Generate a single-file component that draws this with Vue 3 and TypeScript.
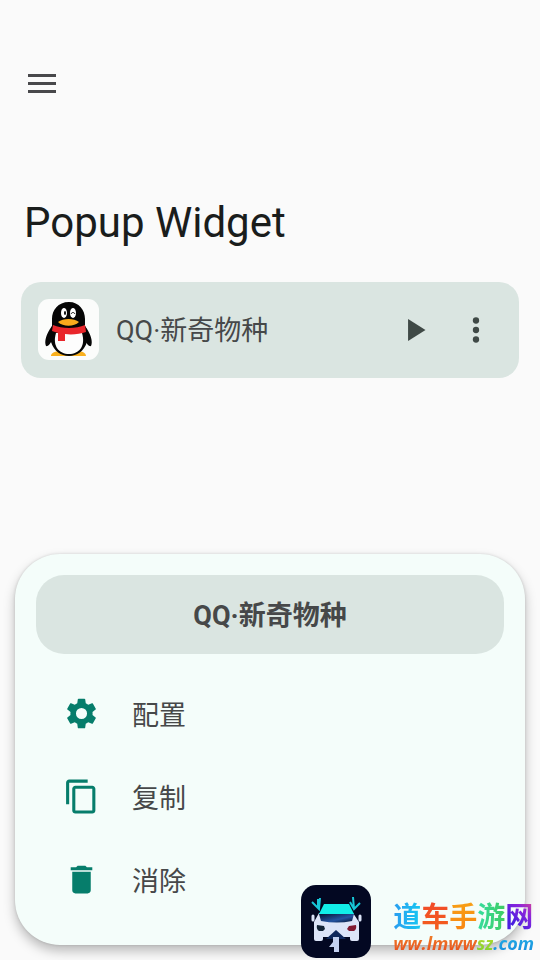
<script setup lang="ts">
import { ref } from 'vue'

interface Action {
  id: string
  label: string
  path: string
}

const widgetName = ref('QQ·新奇物种')

const actions: Action[] = [
  {
    id: 'configure',
    label: '配置',
    path: 'M19.14 12.94c.04-.3.06-.61.06-.94 0-.32-.02-.64-.07-.94l2.03-1.58c.18-.14.23-.41.12-.61l-1.92-3.32c-.12-.22-.37-.29-.59-.22l-2.39.96c-.5-.38-1.03-.7-1.62-.94l-.36-2.54c-.04-.24-.24-.41-.48-.41h-3.84c-.24 0-.43.17-.47.41l-.36 2.54c-.59.24-1.13.57-1.62.94l-2.39-.96c-.22-.08-.47 0-.59.22L2.74 8.87c-.12.21-.08.47.12.61l2.03 1.58c-.05.3-.09.63-.09.94s.02.64.07.94l-2.03 1.58c-.18.14-.23.41-.12.61l1.92 3.32c.12.22.37.29.59.22l2.39-.96c.5.38 1.03.7 1.62.94l.36 2.54c.05.24.24.41.48.41h3.84c.24 0 .44-.17.47-.41l.36-2.54c.59-.24 1.13-.56 1.62-.94l2.39.96c.22.08.47 0 .59-.22l1.92-3.32c.12-.22.07-.47-.12-.61l-2.01-1.58zM12 15.6A3.6 3.6 0 1 1 12 8.4a3.6 3.6 0 0 1 0 7.2z',
  },
  {
    id: 'copy',
    label: '复制',
    path: 'M16 1H4c-1.1 0-2 .9-2 2v14h2V3h12V1zm3 4H8c-1.1 0-2 .9-2 2v14c0 1.1.9 2 2 2h11c1.1 0 2-.9 2-2V7c0-1.1-.9-2-2-2zm0 16H8V7h11v14z',
  },
  {
    id: 'remove',
    label: '消除',
    path: 'M6 19c0 1.100.9 2 2 2h8c1.100 0 2-.9 2-2V7H6v12zM19 4h-3.500l-1-1h-5l-1 1H5v2h14V4z',
  },
]
</script>

<template>
  <div class="page">
    <header class="bar">
      <button class="icon-button" type="button" aria-label="Menu">
        <svg viewBox="0 0 28 20" class="menu-icon"><path d="M0 0h28v3H0zM0 8h28v3H0zM0 16h28v3H0z" /></svg>
      </button>
    </header>

    <main class="content">
      <h1 class="title">Popup Widget</h1>
      <article class="card">
        <svg class="avatar" viewBox="0 0 61 61" aria-hidden="true">
          <rect width="61" height="61" rx="11" fill="#fbfcfb" />
          <path d="M13 57c0-4 7-6 14-4l4 2 4-2c7-2 13 0 13 4z" fill="#f9b01e" />
          <path d="M14 27C8 35 6 43 8 47c2 1 5-3 6-6M47 27c6 8 8 16 6 20-2 1-5-3-6-6" fill="#060606" />
          <path d="M31 3C20 3 14 11 14 20v7c-2 5-3 10-1 16 3 9 10 14 18 14s15-5 18-14c2-6 1-11-2-16v-7C47 11 41 3 31 3z" fill="#060606" />
          <path d="M18 34h26c4 13-3 21-13 21S14 47 18 34z" fill="#fdfdfd" />
          <ellipse cx="26" cy="14" rx="3" ry="5" fill="#fff" />
          <ellipse cx="35" cy="14" rx="3" ry="5" fill="#fff" />
          <ellipse cx="27" cy="14" rx="1" ry="2" fill="#060606" />
          <path d="M33 15c1-2 3-2 4 0" fill="none" stroke="#060606" stroke-width="1" />
          <path d="M20 23c5-4 16-4 21 0-5 5-16 5-21 0z" fill="#f9aa1c" />
          <path d="M15 26c9 4 23 4 32 0l1 7c-6 2-14 3-21 2v7h-7v-8l-6-2z" fill="#e9262b" />
        </svg>
        <span class="card-name">{{ widgetName }}</span>
        <button class="icon-button" type="button" aria-label="Play">
          <svg class="icon" viewBox="0 0 24 24"><path d="M7 5v14l11-7z" /></svg>
        </button>
        <button class="icon-button" type="button" aria-label="More">
          <svg class="icon" viewBox="0 0 24 24">
            <circle cx="12" cy="6" r="2" /><circle cx="12" cy="12" r="2" /><circle cx="12" cy="18" r="2" />
          </svg>
        </button>
      </article>
    </main>

    <section class="sheet" role="dialog" aria-labelledby="sheet-title">
      <h2 id="sheet-title" class="sheet-title">{{ widgetName }}</h2>
      <ul class="actions">
        <li v-for="action in actions" :key="action.id">
          <button class="action" type="button">
            <svg class="action-icon" viewBox="0 0 24 24"><path :d="action.path" /></svg>
            <span>{{ action.label }}</span>
          </button>
        </li>
      </ul>
    </section>

    <aside class="badge">
      <svg class="badge-logo" viewBox="0 0 70 73" aria-hidden="true">
        <defs>
          <linearGradient id="glass" x1="0" y1="0" x2="1" y2="1">
            <stop offset="0" stop-color="#061333" /><stop offset=".6" stop-color="#2453a0" /><stop offset="1" stop-color="#07112c" />
          </linearGradient>
        </defs>
        <rect width="70" height="73" rx="15" fill="#030822" />
        <path d="M18 28l-5 9v17q0 2 2 2h5q2 0 2-2v-2h27v2q0 2 2 2h5q2 0 2-2V37l-6-9z" fill="#dce4f8" />
        <path d="M23 19h25l5 10H18z" fill="#12eee8" />
        <path d="M18 29h35l-2 7q-15 3-31 0z" fill="url(#glass)" />
        <path d="M12 31v4M59 31v4" stroke="#dce4f8" stroke-width="3" stroke-linecap="round" />
        <path d="M16 40l7 1 1 3-2 2h-4q-3-2-2-6z" fill="#122336" />
        <path d="M55 40l-7 1-2 3 2 2h5q3-2 2-6z" fill="#811a32" />
        <path d="M35 45l10 9H25z" fill="#10285c" />
        <path d="M32 52h6v15h-5v-5h-5l4-5z" fill="#c3d0ef" />
        <path d="M11 17l7 7 1-11M17 14v9M52 12l1 12M49 17l4 7 6-6" fill="none" stroke="#17c6d8" stroke-width="2" />
      </svg>
      <div class="badge-text">
        <strong class="badge-name"><span class="sky">道</span><span class="red">车</span><span class="orange">手</span><span class="green">游</span><span class="violet">网</span></strong>
        <span class="badge-url"><span class="flame">ww.lmww</span><span class="lime">sz</span><span class="azure">.com</span></span>
      </div>
    </aside>
  </div>
</template>

<style>
body {
  margin: 0;
  background: #fafafa;
}
</style>

<style scoped>
.page {
  position: relative;
  box-sizing: border-box;
  display: flex;
  flex-direction: column;
  min-height: 100vh;
  padding: 65px 15px 15px;
  overflow: hidden;
  background: #fafafa;
  color: #464849;
  font-family: Roboto, "Noto Sans CJK SC", sans-serif;
  font-size: 27px;
}
button {
  padding: 0;
  border: 0;
  background: none;
  color: inherit;
  font: inherit;
  cursor: pointer;
}
svg {
  display: block;
  flex: none;
}
.bar {
  padding: 0 8px;
}
.icon-button {
  display: grid;
  place-items: center;
  flex: none;
  width: 38px;
  height: 38px;
}
.menu-icon {
  width: 28px;
  height: 20px;
  fill: #48484b;
}
.content {
  padding: 0 6px;
}
.title {
  margin: 96px 3px 35px;
  color: #1a1d1c;
  font-size: 42px;
  font-weight: 400;
  line-height: 48px;
}
.card {
  display: flex;
  align-items: center;
  gap: 22px;
  padding: 17px 24px 18px 17px;
  border-radius: 20px;
  background: #dae5e1;
}
.avatar {
  width: 61px;
  height: 61px;
  margin-right: -5px;
}
.card-name {
  flex: 1;
  padding-top: 2px;
  line-height: 40px;
}
.icon {
  width: 38px;
  height: 38px;
  fill: #3f4946;
}
.sheet {
  margin-top: auto;
  padding: 21px 21px 24px;
  border-radius: 45px;
  background: #f4fdfa;
  box-shadow: 0 6px 12px rgba(0, 0, 0, 0.26), 0 0 3px rgba(0, 0, 0, 0.14);
}
.sheet-title {
  margin: 0 0 18px;
  padding-top: 3px;
  border-radius: 28px;
  background: #dae5e1;
  font-size: 27px;
  font-weight: 700;
  line-height: 76px;
  text-align: center;
}
.actions {
  margin: 0;
  padding: 0;
  list-style: none;
}
.action {
  display: flex;
  align-items: center;
  gap: 32px;
  width: 100%;
  height: 83px;
  padding: 0 27px;
  text-align: left;
}
.action-icon {
  width: 37px;
  height: 37px;
  fill: #067d6b;
}
.badge {
  position: absolute;
  right: 6px;
  bottom: 2px;
  display: flex;
  align-items: flex-end;
  gap: 22px;
}
.badge-logo {
  width: 70px;
  height: 73px;
}
.badge-text {
  display: flex;
  flex-direction: column;
  padding-bottom: 5px;
}
.badge-name {
  display: flex;
  font-family: "Noto Sans CJK SC", sans-serif;
  font-size: 28px;
  font-weight: 700;
  line-height: 36px;
}
.badge-url {
  font-family: "Open Sans", sans-serif;
  font-size: 18px;
  font-style: italic;
  font-weight: 700;
  line-height: 20px;
}
.badge-name span,
.badge-url span {
  background-clip: text;
  color: transparent;
}
.sky { background-image: linear-gradient(90deg, #2a9cf0, #16c8f2); }
.red { background-image: linear-gradient(#f0472c, #f4601a); }
.orange { background-image: linear-gradient(#f7a416, #f98412); }
.green { background-image: linear-gradient(90deg, #35dda0, #3fcc62); }
.violet { background-image: linear-gradient(45deg, #4a1fe0 30%, #8a25dc 65%, #f04c80); }
.flame { background-image: linear-gradient(#f08a2c, #e8481c); }
.lime { background-image: linear-gradient(#c5dc2c, #76cf33); }
.azure { background-image: linear-gradient(#25b9e8, #1687dc); }
</style>
